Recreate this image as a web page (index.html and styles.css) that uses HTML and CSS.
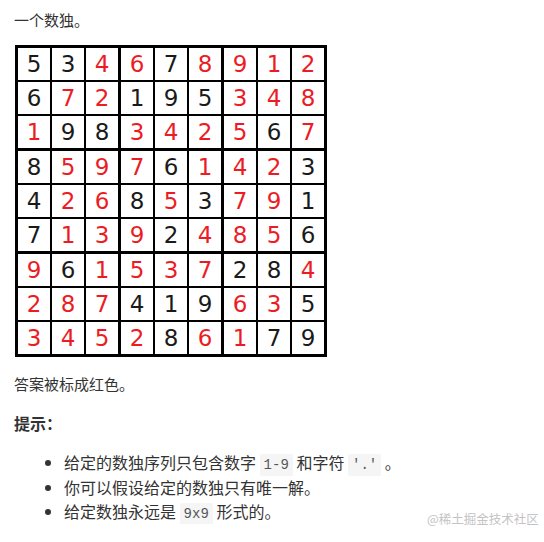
FILE: index.html
```html
<!DOCTYPE html>
<html lang="zh">
<head>
<meta charset="utf-8">
<link rel="stylesheet" href="styles.css">
</head>
<body>
<div class="page">
  <p class="para first">一个数独。</p>
  <div class="board">
    <div class="box">
      <span class="cell">5</span><span class="cell">3</span><span class="cell a">4</span>
      <span class="cell">6</span><span class="cell a">7</span><span class="cell a">2</span>
      <span class="cell a">1</span><span class="cell">9</span><span class="cell">8</span>
    </div>
    <div class="box">
      <span class="cell a">6</span><span class="cell">7</span><span class="cell a">8</span>
      <span class="cell">1</span><span class="cell">9</span><span class="cell">5</span>
      <span class="cell a">3</span><span class="cell a">4</span><span class="cell a">2</span>
    </div>
    <div class="box">
      <span class="cell a">9</span><span class="cell a">1</span><span class="cell a">2</span>
      <span class="cell a">3</span><span class="cell a">4</span><span class="cell a">8</span>
      <span class="cell a">5</span><span class="cell">6</span><span class="cell a">7</span>
    </div>
    <div class="box">
      <span class="cell">8</span><span class="cell a">5</span><span class="cell a">9</span>
      <span class="cell">4</span><span class="cell a">2</span><span class="cell a">6</span>
      <span class="cell">7</span><span class="cell a">1</span><span class="cell a">3</span>
    </div>
    <div class="box">
      <span class="cell a">7</span><span class="cell">6</span><span class="cell a">1</span>
      <span class="cell">8</span><span class="cell a">5</span><span class="cell">3</span>
      <span class="cell a">9</span><span class="cell">2</span><span class="cell a">4</span>
    </div>
    <div class="box">
      <span class="cell a">4</span><span class="cell a">2</span><span class="cell">3</span>
      <span class="cell a">7</span><span class="cell a">9</span><span class="cell">1</span>
      <span class="cell a">8</span><span class="cell a">5</span><span class="cell">6</span>
    </div>
    <div class="box">
      <span class="cell a">9</span><span class="cell">6</span><span class="cell a">1</span>
      <span class="cell a">2</span><span class="cell a">8</span><span class="cell a">7</span>
      <span class="cell a">3</span><span class="cell a">4</span><span class="cell a">5</span>
    </div>
    <div class="box">
      <span class="cell a">5</span><span class="cell a">3</span><span class="cell a">7</span>
      <span class="cell">4</span><span class="cell">1</span><span class="cell">9</span>
      <span class="cell a">2</span><span class="cell">8</span><span class="cell a">6</span>
    </div>
    <div class="box">
      <span class="cell">2</span><span class="cell">8</span><span class="cell a">4</span>
      <span class="cell a">6</span><span class="cell a">3</span><span class="cell">5</span>
      <span class="cell a">1</span><span class="cell">7</span><span class="cell">9</span>
    </div>
  </div>
  <p class="para">答案被标成红色。</p>
  <p class="hint">提示：</p>
  <ul class="tips">
    <li>给定的数独序列只包含数字 <code>1-9</code> 和字符 <code>'.'</code> 。</li>
    <li>你可以假设给定的数独只有唯一解。</li>
    <li>给定数独永远是 <code>9x9</code> 形式的。</li>
  </ul>
</div>
<div class="watermark">@稀土掘金技术社区</div>
</body>
</html>
```

FILE: styles.css
```css
html, body {
  margin: 0;
  padding: 0;
  background: #fff;
}

body {
  font-family: "Noto Sans CJK SC", "Noto Sans", sans-serif;
  color: #333;
}

.page {
  padding: 0 14px;
}

.para {
  font-size: 15px;
  line-height: 24px;
  margin: 0;
}

.para.first {
  padding-top: 8px;
  margin-bottom: 13px;
}

.board {
  width: 306px;
  margin-left: 1px;
  padding: 3px;
  background: #000;
  display: grid;
  grid-template-columns: repeat(3, 100px);
  gap: 3px;
  margin-bottom: 15px;
}

.box {
  display: grid;
  grid-template-columns: repeat(3, 32px);
  grid-auto-rows: 32px;
  gap: 2px;
  background: #000;
}

.cell {
  background: #fff;
  display: flex;
  align-items: center;
  justify-content: center;
  font-family: "DejaVu Sans", sans-serif;
  font-size: 23px;
  line-height: 1;
  color: #1a1a1a;
}

.cell.a {
  color: #ec1c24;
}

.hint {
  font-size: 16px;
  font-weight: bold;
  line-height: 24px;
  margin: 15px 0 15px;
}

.tips {
  margin: 0;
  padding-left: 50px;
  font-size: 16px;
  line-height: 24.5px;
}

.tips li {
  height: 24.5px;
}

.tips code {
  font-family: "Liberation Mono", "DejaVu Sans Mono", monospace;
  font-size: 14px;
  line-height: 16px;
  color: #555;
  background: #f5f5f5;
  padding: 3px 4px;
  border-radius: 2px;
}

.watermark {
  position: absolute;
  left: 427px;
  top: 510px;
  font-family: "Noto Sans CJK SC", sans-serif;
  font-size: 12.5px;
  line-height: 18px;
  color: #c4c4c4;
}
```
